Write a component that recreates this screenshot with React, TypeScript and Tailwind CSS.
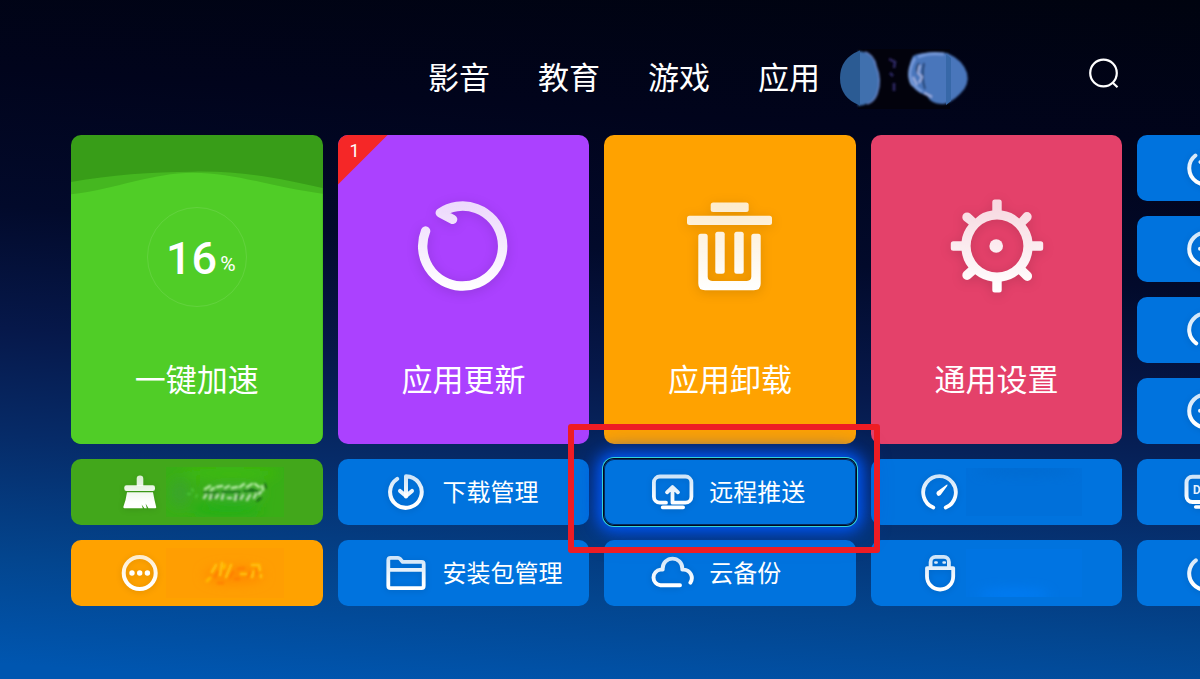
import type { ReactNode } from "react";

const STROKE = "url(#icon-fade)";
const STROKE_LARGE = "url(#icon-fade-large)";

function Gradients() {
  return (
    <svg width="0" height="0" className="absolute" aria-hidden="true">
      <defs>
        <linearGradient id="icon-fade" gradientUnits="userSpaceOnUse" x1="0" y1="4" x2="0" y2="40">
          <stop offset="0" stopColor="#fff" stopOpacity="0.8" />
          <stop offset="0.8" stopColor="#fff" />
        </linearGradient>
        <linearGradient id="icon-fade-large" gradientUnits="userSpaceOnUse" x1="0" y1="4" x2="0" y2="92">
          <stop offset="0" stopColor="#fff" stopOpacity="0.8" />
          <stop offset="1" stopColor="#fff" />
        </linearGradient>
      </defs>
    </svg>
  );
}

function Icon({ children }: { children: ReactNode }) {
  return (
    <svg
      viewBox="0 0 44 44"
      className="size-11 shrink-0 overflow-visible drop-shadow-[0_1px_3px_rgba(0,0,0,0.12)]"
      fill="none"
      stroke={STROKE}
      strokeWidth="4"
      strokeLinecap="round"
      strokeLinejoin="round"
      aria-hidden="true"
    >
      {children}
    </svg>
  );
}

function LargeIcon({ children }: { children: ReactNode }) {
  return (
    <svg
      viewBox="0 0 96 96"
      className="size-24 shrink-0 drop-shadow-[0_2px_6px_rgba(0,0,0,0.14)]"
      fill="none"
      aria-hidden="true"
    >
      {children}
    </svg>
  );
}

const BrushIcon = () => (
  <Icon>
    <g fill={STROKE} stroke="none">
      <path d="M18.7 16V8.800a3.300 3.300 0 0 1 6.600 0V16z" />
      <rect x="6.300" y="15.200" width="30.700" height="5.800" rx="2.200" />
      <path d="M9 22.300H35q1.600 9 3.200 14.600.3 1.300-1 1.300H30.400L27.600 33.600 28.800 38.200H26.400L23.600 34.400 24.800 38.200H6.400q-1.400 0-1-1.400Q7.800 31 9 22.300z" />
    </g>
  </Icon>
);

const MoreIcon = () => (
  <Icon>
    <circle cx="21.700" cy="22" r="16" />
    <g fill="#fff" stroke="none">
      <circle cx="14" cy="22" r="2.700" />
      <circle cx="21.700" cy="22" r="2.700" />
      <circle cx="29.400" cy="22" r="2.700" />
    </g>
  </Icon>
);

const DownloadIcon = () => (
  <Icon>
    <path d="M21 26.500V6.200A15.800 15.800 0 1 1 12.200 8.800" />
    <path d="M15 20.900l6 5.200 6-5.200" />
  </Icon>
);

const FolderIcon = () => (
  <Icon>
    <path
      strokeWidth="3.800"
      d="M3.300 9.300q0-2.400 2.300-2.400h7.400q1.200 0 2 .9l2.700 3.100h19q2 0 2 2v21.800q0 2.400-2.300 2.400H5.600q-2.300 0-2.300-2.400zM3.300 18.800h35.400"
    />
  </Icon>
);

const PushIcon = () => (
  <Icon>
    <path
      strokeWidth="3.800"
      d="M15 32.700H8.900a6 6 0 0 1-6-6V12.500a6 6 0 0 1 6-6h25.500a6 6 0 0 1 6 6v14.200a6 6 0 0 1-6 6H21.500V18M16 22.300l5.500-5.300 5.500 5.300M11.700 37.300h20.400"
    />
  </Icon>
);

const CloudIcon = () => (
  <Icon>
    <path
      strokeWidth="3.900"
      d="M29 34.300H9.500a7.900 7.900 0 0 1 0-15.700h2.200v-1.200a9.800 9.800 0 0 1 19.600 0v1.200h1.400a8.400 8.400 0 0 1 6.700 13"
    />
  </Icon>
);

const GaugeIcon = () => (
  <Icon>
    <path strokeWidth="3.800" d="M15.300 37.500A16.300 16.300 0 1 1 27.700 37.500" />
    <path
      d="M18.900 21.800L28.200 14.900q2-1 1 1.100l-6.600 9.100q-1.600 1.500-3.400.2-1.500-1.700-.3-3.500z"
      fill="#fff"
      stroke="none"
    />
  </Icon>
);

const UsbIcon = () => (
  <Icon>
    <path
      strokeWidth="3.800"
      d="M9 17.100h26.200v8.300a13.100 13.100 0 0 1-26.200 0zM12.600 16v-5.100a5 5 0 0 1 5-5h8.300a5 5 0 0 1 5 5V16"
    />
    <path strokeWidth="2.400" d="M17.300 11.500h1.400M25.500 11.500h1.400" />
  </Icon>
);

const RefreshSmallIcon = () => (
  <Icon>
    <path d="M11.400 9.500A16.200 16.200 0 1 0 21.500 6M16.500 16l5 4" />
  </Icon>
);

const AddIcon = () => (
  <Icon>
    <circle cx="21.500" cy="22" r="16.300" />
    <path d="M16 21.800h11" />
  </Icon>
);

const MeterIcon = () => (
  <Icon>
    <path d="M12.200 35.300A16.300 16.300 0 1 1 30.800 35.300" />
  </Icon>
);

const ScreenIcon = () => (
  <Icon>
    <rect x="2.500" y="6.700" width="38" height="25.400" rx="6" />
    <path d="M11.700 37h20" strokeWidth="3.600" />
    <text x="9" y="23.500" fontFamily="Roboto, sans-serif" fontSize="12" fontWeight="700" fill="#e6f1fc" stroke="none">
      D
    </text>
  </Icon>
);

const PowerIcon = () => (
  <Icon>
    <path d="M11.800 9.300A16.300 16.300 0 1 0 31.200 9.300M21.500 5v14" />
  </Icon>
);

const UpdateIcon = () => (
  <LargeIcon>
    <path
      d="M37.600 21.300L25.300 14.900A40 40 0 1 1 10.600 33"
      stroke={STROKE_LARGE}
      strokeWidth="9.400"
      strokeLinecap="round"
      strokeLinejoin="round"
    />
  </LargeIcon>
);

const TrashIcon = () => (
  <LargeIcon>
    <g fill={STROKE_LARGE}>
      <rect x="28.700" y="4.400" width="38" height="9.600" rx="2.500" />
      <rect x="5" y="17.700" width="85" height="9.400" rx="2.500" />
      <rect x="33.300" y="33.800" width="9.400" height="42" rx="2.500" />
      <rect x="52.300" y="33.800" width="9.400" height="42" rx="2.500" />
      <path d="M16.300 38.200q0-2.500 2.500-2.500h4.400q2.500 0 2.500 2.500V78.500q0 4.400 4.400 4.400h34.800q4.400 0 4.400-4.400V38.200q0-2.500 2.500-2.500h4.400q2.500 0 2.500 2.500V85.500q0 6.800-6.800 6.800H23.100q-6.800 0-6.800-6.800z" />
    </g>
  </LargeIcon>
);

const GearIcon = () => (
  <LargeIcon>
    <path
      fill={STROKE_LARGE}
      fillRule="evenodd"
      d="M43.300 12.600V4q0-2.500 2.500-2.500h4.400q2.500 0 2.500 2.500v8.600Q63 13.800 70.200 20.500L74.600 15.500a4.700 4.700 0 0 1 6.700 6.700L76.500 26.700Q82.300 33.500 83.400 43.300H91.700q2.500 0 2.500 2.500v4.400q0 2.500-2.500 2.500H83.400Q82.300 62.500 76.500 69.800L81.700 74.800a4.700 4.700 0 0 1-6.700 6.700L69.700 76.200Q62.500 82.200 52.700 83.400V92q0 2.500-2.500 2.500h-4.400q-2.500 0-2.500-2.500V83.400Q33.500 82.200 26.200 76.200L21.400 80.500a4.700 4.700 0 0 1-6.700-6.700L19.500 69.500Q13.700 62.500 12.600 52.700H4.300q-2.500 0-2.500-2.500v-4.400q0-2.500 2.500-2.500H12.600Q13.700 33.500 19.800 26.500L14.700 22.500a4.700 4.700 0 0 1 6.700-6.700L26.500 20.500Q33 13.800 43.300 12.600zM48 21.600a26.400 26.400 0 1 0 0 52.800 26.400 26.400 0 1 0 0-52.800z"
    />
    <circle cx="47.200" cy="48" r="6.800" fill={STROKE_LARGE} />
  </LargeIcon>
);

function GreenSmudge() {
  return (
    <svg viewBox="0 0 118 50" className="ml-1 h-[50px] w-[118px] shrink-0" aria-hidden="true">
      <defs>
        <filter id="smudge-soft" x="-60%" y="-100%" width="220%" height="300%">
          <feGaussianBlur stdDeviation="6" />
        </filter>
        <filter id="smudge-fine" x="-20%" y="-40%" width="140%" height="180%">
          <feGaussianBlur stdDeviation="0.9" />
        </filter>
        <clipPath id="smudge-clip">
          <rect width="118" height="50" />
        </clipPath>
      </defs>
      <rect width="118" height="50" fill="#39ae16" />
      <g clipPath="url(#smudge-clip)">
        <g filter="url(#smudge-soft)">
          <ellipse cx="14" cy="26" rx="10" ry="14" fill="#3ba52c" />
          <ellipse cx="64" cy="6" rx="48" ry="6" fill="#3ebc0b" />
          <ellipse cx="60" cy="42" rx="36" ry="7" fill="#22b014" />
          <ellipse cx="68" cy="25" rx="30" ry="8" fill="#42ab30" />
        </g>
      </g>
      <g filter="url(#smudge-fine)" fill="none" strokeLinecap="round">
        <path
          d="M39 22l5-3M45 23l3-2M51 20l5-1M59 21l4-2M66 21l5-1M74 20l4-3M81 20l5-3M89 17l4 3M96 19l1 4"
          stroke="#b4eaa2"
          strokeWidth="2.500"
        />
        <path d="M38 25.500h14M56 25h18M78 24h14" stroke="#1f7a1b" strokeWidth="1.800" />
        <path
          d="M38 31l2-3M44 32l1-4M50 31l2-3M56 32l1-4M62 31h3M69 33l1-5M75 32l2-4M81 33l3-5M88 31l2-4M93 27l2-2"
          stroke="#b3dfa9"
          strokeWidth="2.500"
        />
        <path d="M99 17l1 4M95 31l-4 3M84 22l4 1M72 29v3M47 29v2" stroke="#126416" strokeWidth="1.800" />
        <path d="M26 22l1 2M30 30l1-2M22 27h2" stroke="#4cc739" strokeWidth="1.800" />
      </g>
    </svg>
  );
}

function OrangeSmudge() {
  return (
    <svg viewBox="0 0 118 50" className="ml-1 h-[50px] w-[118px] shrink-0" aria-hidden="true">
      <rect width="118" height="50" fill="#ff9e02" />
      <g clipPath="url(#smudge-clip)">
        <ellipse cx="68" cy="27" rx="30" ry="8" fill="#ff8a00" filter="url(#smudge-soft)" />
      </g>
      <g filter="url(#smudge-fine)" fill="none" strokeLinecap="round">
        <path d="M46 24l4-7M54 27l2-12M65 17l-5 12M75 26h5M86 17h5M93 17l1 5M88 23l-2 6M95 27v2" stroke="#ffbf0a" strokeWidth="3" />
        <path d="M49 29l3-5M64 29l3-5M72 21l6-1M82 28l2-3M90 21v5M52 35h5M69 31h4" stroke="#ff7800" strokeWidth="3" strokeOpacity="0.6" />
        <path d="M41 33l3-3M58 20l1-3" stroke="#ffb900" strokeWidth="3" />
      </g>
    </svg>
  );
}

function BlueSmudge({ bright }: { bright?: boolean }) {
  return (
    <svg viewBox="0 0 116 48" className="ml-1 h-12 w-[116px] shrink-0" aria-hidden="true">
      <defs>
        <clipPath id="blue-clip">
          <rect width="116" height="48" />
        </clipPath>
      </defs>
      <rect width="116" height="48" fill={bright ? "#0074e2" : "#0070da"} />
      <g clipPath="url(#blue-clip)">
        {bright ? (
          <ellipse cx="48" cy="46" rx="36" ry="6" fill="#007cf4" filter="url(#smudge-soft)" />
        ) : (
          <ellipse cx="60" cy="3" rx="50" ry="5" fill="#006ad0" filter="url(#smudge-soft)" />
        )}
      </g>
    </svg>
  );
}

function HeaderSmudge() {
  return (
    <svg viewBox="0 0 132 62" className="mt-1 ml-5 h-[62px] w-[132px] shrink-0" aria-hidden="true">
      <defs>
        <filter id="blob-soft" x="-20%" y="-20%" width="140%" height="140%">
          <feGaussianBlur stdDeviation="0.900" />
        </filter>
      </defs>
      <rect x="18" y="2" width="92" height="60" fill="#02020c" />
      <g filter="url(#blob-soft)">
        <path d="M18 4q14 1 18 14 6 15 1 29-4 10-19 12z" fill="#4070ae" />
        <path d="M25 5q9 3 11 14 6 14 1 28-3 8-10 10" fill="none" stroke="#6482c4" strokeWidth="1.600" />
        <path d="M73 9q8-5 34-3 16 7 20 20 3 12-7 21-8 8-16 10-12 1-17-8-14-5-18-16-1-15 4-24z" fill="#4a76bb" />
        <path d="M75 11q-9 14-3 26l10 8M78 10q10-5 26-3" fill="none" stroke="#7499da" strokeWidth="3" />
        <path d="M79 16q-4 6-1 11M84 16q-3 14 1 26" fill="none" stroke="#1d3a66" strokeWidth="1.800" />
        <path d="M80 18l-2 8 4 4-3 6M73 30l4 8M84 46l8 4" fill="none" stroke="#9fb0e0" strokeWidth="2" />
        <path d="M49 12l6 3-1 6M54 36v8M50 26l3 3" fill="none" stroke="#302a69" strokeWidth="2.500" />
      </g>
      <path d="M20 3.500Q0 11 0 31t20 27.500z" fill="#2b5b93" />
      <path d="M106 7l5 4v43l-5 4z" fill="#3768a8" />
    </svg>
  );
}

type TileProps = { label: string; icon: ReactNode; smudge?: ReactNode; tone?: string; focused?: boolean };

function Tile({ label, icon, smudge, tone = "bg-[#0073de]", focused }: TileProps) {
  return (
    <div className={focused ? "relative z-10" : ""}>
      <button
        type="button"
        aria-label={label}
        className={`flex h-full w-full items-center overflow-hidden rounded-[10px] pl-[47px] text-left ${tone} ${
          focused
            ? "shadow-[inset_0_0_0_1px_#052a5c,0_0_0_1px_#020a1c,0_0_0_2px_#32d3dc,0_0_14px_6px_#0056f0,0_0_26px_8px_rgba(0,70,220,0.5)]"
            : ""
        }`}
      >
        {icon}
        {smudge ?? <span className="ml-[14px] pb-[3px] text-[24px] leading-8 whitespace-nowrap">{label}</span>}
      </button>
      {focused && (
        <div className="pointer-events-none absolute -top-[35px] -right-6 -bottom-7 -left-9 rounded-[3px] border-6 border-[#ee1c24]" />
      )}
    </div>
  );
}

function FeatureTile({ label, tone, icon, badge }: { label: string; tone: string; icon: ReactNode; badge?: string }) {
  return (
    <button
      type="button"
      className={`relative row-span-4 flex flex-col items-center gap-16 overflow-hidden rounded-[10px] pt-[63px] ${tone}`}
    >
      {badge && (
        <span className="absolute top-0 left-0 size-[50px] bg-[#f52727] pt-1 pl-3 text-left font-[Roboto,sans-serif] text-[18px] leading-6 [clip-path:polygon(0_0,100%_0,0_100%)]">
          {badge}
        </span>
      )}
      {icon}
      <span className="text-[31px] leading-10">{label}</span>
    </button>
  );
}

function BoostTile() {
  return (
    <button
      type="button"
      className="relative row-span-4 flex flex-col items-center gap-[51px] overflow-hidden rounded-[10px] bg-[#389d18] pt-[72px]"
    >
      <svg
        viewBox="0 0 252 309"
        preserveAspectRatio="none"
        className="absolute inset-0 h-full w-full"
        aria-hidden="true"
      >
        <path d="M0 47C40 40 80 36.700 122 36.700C175 35.500 215 45 252 53V309H0z" fill="#45b720" />
        <path d="M0 59.300C45 54 82 37.700 122 37.700C165 37.700 200 52 252 58.700V309H0z" fill="#50cd27" />
      </svg>
      <span className="relative flex size-[100px] items-end justify-center gap-[3px] rounded-full border border-white/10 pb-5 pl-2 font-[Roboto,sans-serif]">
        <span className="text-[45px] leading-[54px] font-medium">16</span>
        <span className="text-[21px] leading-11">%</span>
      </span>
      <span className="relative text-[31px] leading-10">一键加速</span>
    </button>
  );
}

const tabs = ["影音", "教育", "游戏", "应用"];

export default function App() {
  return (
    <div className="min-h-screen overflow-hidden bg-[linear-gradient(184deg,#00030f_0%,#01041c_20%,#020a2b_38%,#06184a_54%,#062b68_68%,#03458e_84%,#0056b0_98%)] font-['Noto_Sans_CJK_SC',sans-serif] text-white">
      <Gradients />
      <header className="flex h-[135px] items-center pt-4 pr-[81px] pl-[428px]">
        <nav className="flex shrink-0 gap-12">
          {tabs.map((tab) => (
            <a key={tab} href="#" className="text-[31px] leading-10 whitespace-nowrap">
              {tab}
            </a>
          ))}
        </nav>
        <HeaderSmudge />
        <button type="button" aria-label="搜索" className="mb-1.5 ml-auto">
          <svg viewBox="0 0 32 32" className="size-8" fill="none" stroke="#fff" strokeWidth="2.200" aria-hidden="true">
            <circle cx="16.500" cy="16" r="13.300" />
            <path d="M25.500 25.500l5 4.800" />
          </svg>
        </button>
      </header>

      <main className="pl-[71px]">
        <div className="-mr-[189px] grid grid-flow-col grid-cols-5 grid-rows-[repeat(6,66px)] gap-[15px]">
          <BoostTile />
          <Tile label="清理" icon={<BrushIcon />} smudge={<GreenSmudge />} tone="bg-[#42a71b]" />
          <Tile label="更多" icon={<MoreIcon />} smudge={<OrangeSmudge />} tone="bg-[#ffa200]" />

          <FeatureTile label="应用更新" tone="bg-[#ab41ff]" icon={<UpdateIcon />} badge="1" />
          <Tile label="下载管理" icon={<DownloadIcon />} />
          <Tile label="安装包管理" icon={<FolderIcon />} />

          <FeatureTile label="应用卸载" tone="bg-[#ffa200]" icon={<TrashIcon />} />
          <Tile label="远程推送" icon={<PushIcon />} focused />
          <Tile label="云备份" icon={<CloudIcon />} />

          <FeatureTile label="通用设置" tone="bg-[#e4416a]" icon={<GearIcon />} />
          <Tile label="测速" icon={<GaugeIcon />} smudge={<BlueSmudge />} />
          <Tile label="存储" icon={<UsbIcon />} smudge={<BlueSmudge bright />} />

          <Tile label="刷新" icon={<RefreshSmallIcon />} smudge={<span />} />
          <Tile label="添加" icon={<AddIcon />} smudge={<span />} />
          <Tile label="监测" icon={<MeterIcon />} smudge={<span />} />
          <Tile label="扩展" icon={<AddIcon />} smudge={<span />} />
          <Tile label="投屏" icon={<ScreenIcon />} smudge={<span />} />
          <Tile label="电源" icon={<PowerIcon />} smudge={<span />} />
        </div>
      </main>
    </div>
  );
}
